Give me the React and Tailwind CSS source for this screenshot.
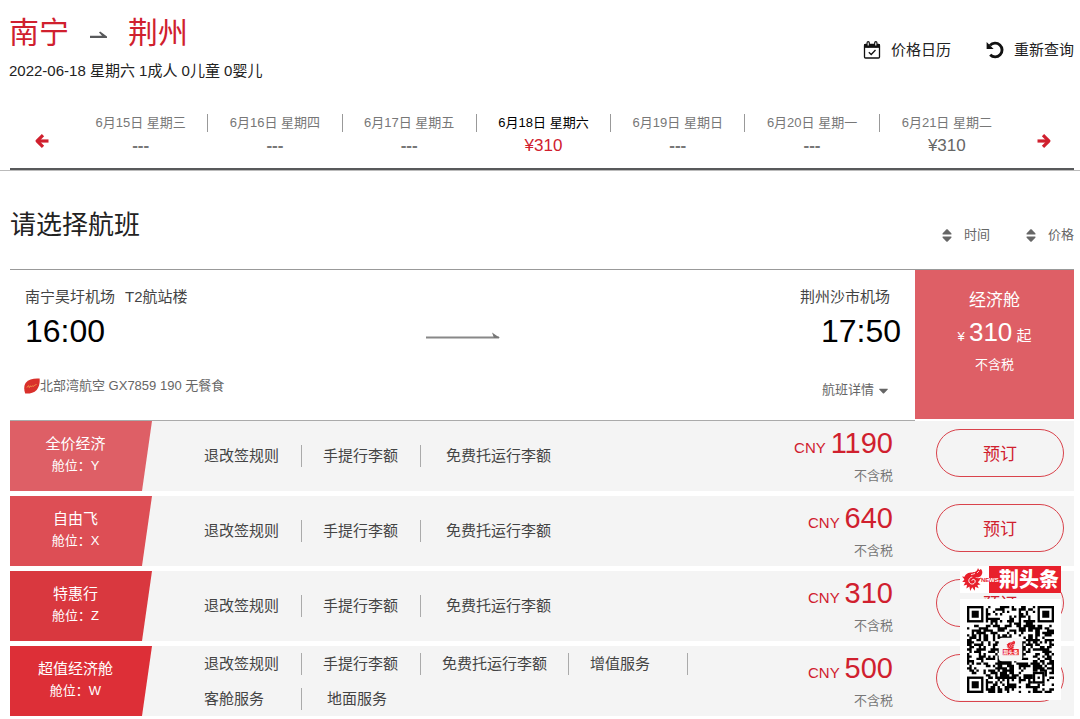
// App.jsx
import { FaCaretDown } from 'react-icons/fa';

const days = [
  { date: '6月15日 星期三' },
  { date: '6月16日 星期四' },
  { date: '6月17日 星期五' },
  { date: '6月18日 星期六', price: '¥310', selected: true },
  { date: '6月19日 星期日' },
  { date: '6月20日 星期一' },
  { date: '6月21日 星期二', price: '¥310' }
];

const baseRules = [['退改签规则', '手提行李额', '免费托运行李额']];

const fares = [
  { name: '全价经济', cabin: 'Y', price: 1190, color: 'bg-[#de5f66]', rules: baseRules },
  { name: '自由飞', cabin: 'X', price: 640, color: 'bg-[#dd4e55]', rules: baseRules },
  { name: '特惠行', cabin: 'Z', price: 310, color: 'bg-[#d9383f]', rules: baseRules },
  {
    name: '超值经济舱',
    cabin: 'W',
    price: 500,
    color: 'bg-[#dd2f37]',
    rules: [
      ['退改签规则', '手提行李额', '免费托运行李额', '增值服务'],
      ['客舱服务', '地面服务']
    ]
  }
];

function ArrowIcon({ className }) {
  return (
    <svg className={className} width="14" height="14" viewBox="0 0 14 14" fill="none" stroke="currentColor" strokeWidth="3.2">
      <path d="M8 1.200L2.200 7 8 12.800" strokeLinejoin="round" />
      <path d="M3 7h10.500" />
    </svg>
  );
}

function CalendarIcon() {
  return (
    <svg width="18" height="18" viewBox="0 0 18 18" fill="none" stroke="#111">
      <rect x="1.5" y="3.500" width="15" height="13.500" rx="1" strokeWidth="1.3" />
      <path d="M1.500 3.500h15v2.800h-15z" fill="#111" />
      <path d="M5.200 1.800v3M12.800 1.800v3" strokeWidth="3.400" strokeLinecap="round" />
      <path d="M5.200 1.500v3M12.800 1.500v3" stroke="#fff" strokeWidth="1.100" />
      <path d="M5.800 11.200l2.400 2.300 4.300-4.500" strokeWidth="1.300" />
    </svg>
  );
}

function UndoIcon() {
  return (
    <svg width="18" height="18" viewBox="0 0 18 18" fill="none">
      <path d="M4 4.400A6.900 6.900 0 1 1 4.200 13.800" stroke="#111" strokeWidth="2.900" />
      <path d="M.6 1v7h7z" fill="#111" />
    </svg>
  );
}

function SortIcon() {
  return (
    <svg width="10" height="13" viewBox="0 0 10 13" fill="#666">
      <path d="M4.300 .6c.4-.4 1-.4 1.400 0l3.600 3.700c.5.6.2 1.300-.6 1.300H1.300c-.8 0-1.100-.7-.6-1.300z" />
      <path d="M4.300 12.400c.4.4 1 .4 1.400 0l3.600-3.700c.5-.6.2-1.300-.6-1.300H1.300c-.8 0-1.100.7-.6 1.300z" />
    </svg>
  );
}

function AirlineLogo() {
  return (
    <svg className="-ml-px" width="16" height="16" viewBox="0 0 16 16" fill="none">
      <path d="M15.600 .5C10 0 4.500 1.200 1.800 4.700-.3 7.600-.1 12 1.200 15.500c3.600.4 8.700-.4 11.500-3.600C15.300 8.800 16 4.500 15.600 .5z" fill="#d9302b" />
      <path d="M3 9.500c1-2 2.300-2.300 2-.9s.9.900 1.500-.5.800 1.500 1.700.2.900.900 1.900-.5 1.500-.7 2.400-1.300" stroke="#f6a04c" strokeWidth=".9" />
    </svg>
  );
}

function DragonLogo() {
  return (
    <g fill="#e8202c">
      <path d="M2 12c0-4 3-7 7-7 3 0 6-.5 7-4.500l1.200 2.300 1.600-1.300c2.200 2 2 5.500-.5 7.500-2 1.500-4 1-5.500.6 2.500 1.500 4.500 1.600 6.500.4-.8 2.500-3.500 3.500-6 2.500z" />
      <path d="M4 9.500l-4-.6 2.600 3L.2 14.300l3.200.4L1.600 18l3.400-.8-.6 3.800 3-2 .8 4.500 2-3.800 2.500 3.500.5-4 3.500 1.600-1.400-3.400 3.200-.4-2.700-2.200 2-2-5-1.800z" />
      <path d="M9.800 13.200c.6-2.400 4-1.400 3.300 1.200-.7 2.700-4.800 2.900-6 .2-1-2.500.8-4.800 3.200-5" fill="none" stroke="#fff" strokeWidth="1" />
      <path d="M9 7.200l4-1.200M15 5.500l2-2" stroke="#fff" strokeWidth=".8" />
    </g>
  );
}

const QR_SIZE = 37;

function isFinder(x, y) {
  const near = (v) => v < 8;
  const far = (v) => v > QR_SIZE - 9;
  return (near(x) && near(y)) || (far(x) && near(y)) || (near(x) && far(y));
}

// dark modules of the data area, merged into one path
function qrPath() {
  let d = '';
  let seed = 2022;
  for (let y = 0; y < QR_SIZE; y++) {
    for (let x = 0; x < QR_SIZE; x++) {
      seed = (seed * 16807) % 2147483647;
      const inMark = x > 27 && x < 33 && y > 27 && y < 33;
      const inLogo = x > 13 && x < 23 && y > 13 && y < 23;
      if (isFinder(x, y) || inMark || inLogo) continue;
      if (seed % 100 < 52) d += `M${x} ${y}h1v1h-1z`;
    }
  }
  return d;
}

const dataPath = qrPath();

function QrCode() {
  return (
    <svg className="block w-full" viewBox="0 0 37 37" role="img" aria-label="二维码">
      <path d={dataPath} fill="#000" />
      {[[0, 0], [30, 0], [0, 30]].map(([x, y]) => (
        <g key={`${x}-${y}`}>
          <rect x={x + 0.5} y={y + 0.5} width="6" height="6" fill="none" stroke="#000" />
          <rect x={x + 2} y={y + 2} width="3" height="3" />
        </g>
      ))}
      <rect x="28.500" y="28.500" width="4" height="4" fill="none" stroke="#000" />
      <rect x="30" y="30" width="1" height="1" />
      <rect x="13.500" y="13.500" width="10" height="10" rx="1.500" fill="#f6f6f6" />
      <g transform="translate(16.800 14.600) scale(.18)">
        <DragonLogo />
      </g>
      <rect x="15.200" y="18.300" width="6.800" height="2.600" fill="#e8202c" />
      <text x="18.600" y="20.400" fontSize="2.100" fontWeight="bold" textAnchor="middle" fill="#fff">荆头条</text>
    </svg>
  );
}

function NewsBadge() {
  return (
    <aside className="absolute top-[566px] right-[19px] w-[101px]">
      <div className="flex h-[27px] bg-white">
        <div className="relative w-[29px]">
          <svg className="absolute top-0 left-0" width="30" height="27" viewBox="0 0 30 27">
            <g transform="translate(2 1.500)">
              <DragonLogo />
            </g>
          </svg>
        </div>
        <div className="relative flex flex-1 items-center justify-end bg-[#e8202c] pr-[2px]">
          <span className="absolute top-[10px] -left-[8px] text-[6px] leading-2 font-bold text-[#e8202c]">NE</span>
          <span className="absolute top-[10px] left-0 text-[6px] leading-2 font-bold text-white">WS</span>
          <span className="text-[20px] leading-6 font-black text-white">荆头条</span>
        </div>
      </div>
      <div className="mt-[6px] bg-white p-[7px]">
        <QrCode />
      </div>
    </aside>
  );
}

function DateTabs() {
  return (
    <nav className="border-b border-[#bbb] pr-[6px] pl-[10px]">
      <div className="flex items-center border-b-2 border-[#58595b] pb-[10px]">
        <button aria-label="前一天" className="flex w-[64px] justify-center pt-[10px] text-[#d0202e]">
          <ArrowIcon />
        </button>
        <ul className="flex flex-1">
          {days.map((day, i) => (
            <li key={day.date} className="flex flex-1 items-start">
              <button className="flex-1 text-center">
                <span className={`block text-[13px] leading-5 ${day.selected ? 'text-black' : 'text-[#777]'}`}>
                  {day.date}
                </span>
                {day.price ? (
                  <span className={`mt-px block text-[17px] leading-6 ${day.selected ? 'text-[#d0202e]' : 'text-[#666]'}`}>
                    {day.price}
                  </span>
                ) : (
                  <span className="mt-px block text-[17px] leading-6 font-bold text-[#777]">---</span>
                )}
              </button>
              {i < days.length - 1 && <span className="mt-px h-[18px] w-px bg-[#999]" />}
            </li>
          ))}
        </ul>
        <button aria-label="后一天" className="flex w-[60px] justify-center pt-[10px] text-[#d0202e]">
          <ArrowIcon className="rotate-180" />
        </button>
      </div>
    </nav>
  );
}

function FlightCard() {
  return (
    <article className="flex border-t border-[#999]">
      <div className="grid h-[151px] flex-1 grid-cols-[1fr_auto_1fr] border-b border-[#aaa] pt-[15px] pr-[14px] pl-[15px]">
        <div>
          <p className="text-[15px] leading-6 text-[#444]">
            南宁昊圩机场<span className="ml-[10px]">T2航站楼</span>
          </p>
          <p className="mt-[2px] text-[32px] leading-10 text-black">16:00</p>
          <p className="mt-[25px] flex items-center text-[13px] leading-5 text-[#666]">
            <AirlineLogo />
            北部湾航空 GX7859 190 无餐食
          </p>
        </div>
        <svg className="mt-[46px]" width="75" height="9" viewBox="0 0 75 9" fill="none">
          <path d="M0 6.500h73" stroke="#888" strokeWidth="2" />
          <path d="M66 1.500l8 5.500h-6z" fill="#777" />
        </svg>
        <div className="flex flex-col items-end">
          <p className="pr-[11px] text-[15px] leading-6 text-[#444]">荆州沙市机场</p>
          <p className="mt-[2px] text-[32px] leading-10 text-black">17:50</p>
          <button className="mt-[29px] mr-[10px] flex items-center gap-[2px] text-[13px] leading-5 text-[#666]">
            航班详情
            <FaCaretDown size={15} />
          </button>
        </div>
      </div>
      <button className="flex h-[149px] w-[159px] flex-col items-center bg-[#de5f66] pt-[19px] text-white">
        <span className="text-[17px] leading-6">经济舱</span>
        <span className="mt-[3px] text-[15px] leading-8">
          <span className="text-[13px]">¥</span> <span className="text-[26px]">310</span> 起
        </span>
        <span className="mt-[2px] text-[13px] leading-5">不含税</span>
      </button>
    </article>
  );
}

function FareRow({ fare }) {
  return (
    <li className="flex min-h-[70px] bg-[#f4f4f4]">
      <div className={`w-[142px] pt-[11px] pr-[11px] text-center text-white [clip-path:polygon(0_0,100%_0,132px_100%,0_100%)] ${fare.color}`}>
        <p className="text-[15px] leading-6">{fare.name}</p>
        <p className="text-[13px] leading-5">舱位：{fare.cabin}</p>
      </div>
      <div className="ml-[31px] flex flex-col justify-center text-[15px] text-[#444]">
        {fare.rules.map((line, row) => (
          <div key={row} className="flex h-[35px] items-center">
            {line.map((rule, i) => {
              const isLast = row === fare.rules.length - 1 && i === line.length - 1;
              return (
                <a
                  key={rule}
                  href="#rules"
                  className={`min-w-[119px] leading-[22px] ${isLast ? 'pl-[25px]' : 'border-r border-[#aaa] px-[21px]'}`}
                >
                  {rule}
                </a>
              );
            })}
          </div>
        ))}
      </div>
      <div className="mr-[43px] ml-auto pt-[6px] text-right">
        <p className="text-[15px] leading-8 text-[#d0202e]">
          CNY <span className="ml-px text-[29px]">{fare.price}</span>
        </p>
        <p className="mt-[2px] text-[13px] leading-5 text-[#777]">不含税</p>
      </div>
      <button className="mt-[8px] mr-[10px] h-[48px] w-[128px] rounded-full border border-[#d9434c] pt-[4px] text-[17px] text-[#d0202e]">
        预订
      </button>
    </li>
  );
}

export default function App() {
  return (
    <main className="relative bg-white pb-[3px] font-['Liberation_Sans','Noto_Sans_CJK_SC',sans-serif]">
      <header className="flex items-start justify-between pt-[13px] pr-[6px] pl-[9px]">
        <div>
          <h1 className="flex items-center text-[30px] leading-10 text-[#d0202e]">
            南宁
            <svg className="mx-[20px] mt-[3px]" width="19" height="8" viewBox="0 0 19 8">
              <path d="M1 4.800h12L10 1.500l1.200-1L18 5.500v1.500H1z" fill="#58595b" />
            </svg>
            荆州
          </h1>
          <p className="mt-[6px] text-[15px] leading-6 text-[#222]">2022-06-18 星期六 1成人 0儿童 0婴儿</p>
        </div>
        <div className="mt-[25px] flex gap-[35px] text-[15px] leading-6 text-[#222]">
          <button className="flex items-center gap-[10px]">
            <CalendarIcon />
            价格日历
          </button>
          <button className="flex items-center gap-[10px]">
            <UndoIcon />
            重新查询
          </button>
        </div>
      </header>

      <div className="mt-[30px]">
        <DateTabs />
      </div>

      <section className="pt-[34px] pr-[6px] pl-[10px]">
        <div className="flex items-end justify-between pb-[24px]">
          <h2 className="text-[26px] leading-10 text-[#222]">请选择航班</h2>
          <div className="flex gap-[36px] text-[13px] leading-5 text-[#666]">
            <button className="flex items-center gap-[12px]">
              <SortIcon />
              时间
            </button>
            <button className="flex items-center gap-[12px]">
              <SortIcon />
              价格
            </button>
          </div>
        </div>

        <FlightCard />
        <ul className="flex flex-col gap-[5px]">
          {fares.map((fare) => (
            <FareRow key={fare.cabin} fare={fare} />
          ))}
        </ul>
      </section>

      <NewsBadge />
    </main>
  );
}
